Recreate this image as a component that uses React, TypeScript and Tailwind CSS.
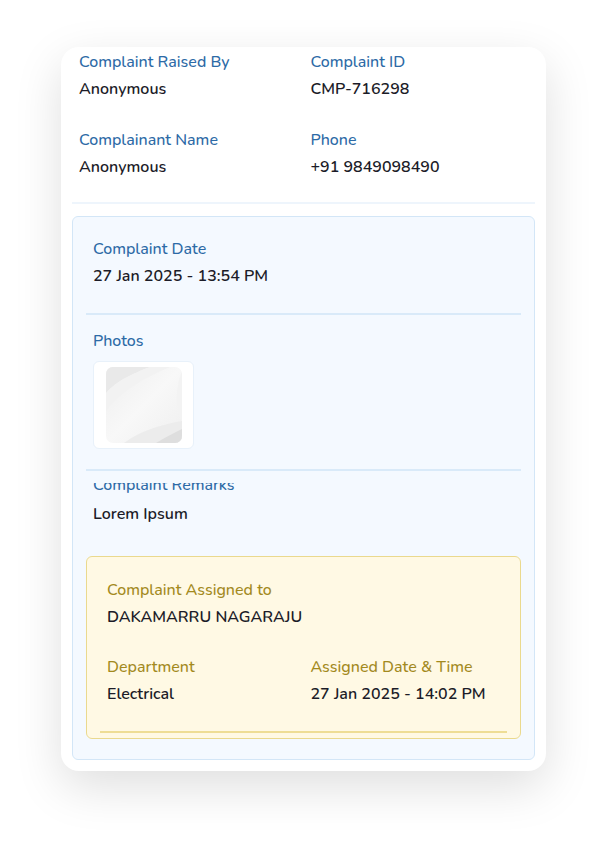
import React from "react";

const Label = ({ children, tone = "blue" }: { children: React.ReactNode; tone?: "blue" | "yellow" }) => (
  <div
    className={
      "text-[16px] leading-5 font-medium whitespace-nowrap " +
      (tone === "blue" ? "text-[#2d6aa6]" : "text-[#a38a1e]")
    }
  >
    {children}
  </div>
);

const Value = ({ children, className = "mt-[7px]" }: { children: React.ReactNode; className?: string }) => (
  <div className={"text-[16px] leading-5 font-semibold text-[#1c1c28] whitespace-nowrap " + className}>{children}</div>
);

const Field = ({ label, value, tone }: { label: string; value: string; tone?: "blue" | "yellow" }) => (
  <div className="pl-[7px]">
    <Label tone={tone}>{label}</Label>
    <Value>{value}</Value>
  </div>
);

const PhotoThumb = () => (
  <div className="w-[101px] h-[88px] bg-white rounded-[6px] border border-[#e8f1fa] flex items-center justify-center">
    <svg width="76" height="76" viewBox="0 0 76 76">
      <defs>
        <linearGradient id="g1" x1="0" y1="0" x2="1" y2="1">
          <stop offset="0" stopColor="#eeeeee" />
          <stop offset="0.5" stopColor="#f8f8f8" />
          <stop offset="1" stopColor="#efefef" />
        </linearGradient>
        <clipPath id="c1">
          <rect x="0" y="0" width="76" height="76" rx="7" />
        </clipPath>
      </defs>
      <g clipPath="url(#c1)">
        <rect x="0" y="0" width="76" height="76" fill="url(#g1)" />
        <path d="M0 26 C 10 14, 28 6, 44 0 L 0 0 Z" fill="#e9e9e9" />
        <path d="M0 44 C 12 28, 34 12, 64 0 L 44 0 C 28 6, 10 14, 0 26 Z" fill="#f2f2f2" />
        <path d="M76 4 C 68 24, 70 44, 76 56 Z" fill="#f3f3f3" />
        <path d="M18 76 C 34 64, 54 58, 76 54 L 76 76 Z" fill="#ececec" />
        <path d="M50 76 C 60 70, 68 66, 76 62 L 76 76 Z" fill="#dedede" />
      </g>
    </svg>
  </div>
);

export default function App() {
  return (
    <div className="w-[606px] h-[846px] bg-white" style={{ fontFamily: "'Nunito', 'Open Sans', sans-serif" }}>
      <div className="pt-[47px] pl-[61px]">
        <div className="w-[485px] h-[724px] bg-white rounded-[18px] shadow-[0_16px_48px_rgba(0,0,0,0.13)] px-[11px] overflow-hidden">
          {/* top section */}
          <div className="grid grid-cols-2 pt-[5px] gap-y-[31px]">
            <Field label="Complaint Raised By" value="Anonymous" />
            <Field label="Complaint ID" value="CMP-716298" />
            <Field label="Complainant Name" value="Anonymous" />
            <Field label="Phone" value="+91 9849098490" />
          </div>
          <div className="mt-[25px] h-[2px] bg-[#eef5fc]" />

          {/* blue box */}
          <div className="mt-[12px] h-[544px] border border-[#d3e6f7] bg-[#f4f9ff] rounded-[6px] px-[13px] pt-[22px]">
            <Field label="Complaint Date" value="27 Jan 2025 - 13:54 PM" />
            <div className="mt-[27px] h-[2px] bg-[#d9eaf9]" />
            <div className="pl-[7px] mt-[16px]">
              <Label>Photos</Label>
              <div className="mt-[10px]">
                <PhotoThumb />
              </div>
            </div>
            <div className="mt-[20px] h-[2px] bg-[#d9eaf9]" />
            <div className="mt-[12px] overflow-hidden pl-[7px]">
              <div className="-mt-[8px]">
                <Label>Complaint Remarks</Label>
              </div>
              <Value className="mt-[9px]">Lorem Ipsum</Value>
            </div>

            {/* yellow box */}
            <div className="mt-[32px] h-[183px] border border-[#ead98e] bg-[#fff9e4] rounded-[6px] px-[13px] pt-[23px]">
              <Field tone="yellow" label="Complaint Assigned to" value="DAKAMARRU NAGARAJU" />
              <div className="grid grid-cols-2 mt-[30px]">
                <Field tone="yellow" label="Department" value="Electrical" />
                <Field tone="yellow" label="Assigned Date & Time" value="27 Jan 2025 - 14:02 PM" />
              </div>
              <div className="mt-[27px] h-[2px] bg-[#eedd95]" />
            </div>
          </div>
        </div>
      </div>
    </div>
  );
}
